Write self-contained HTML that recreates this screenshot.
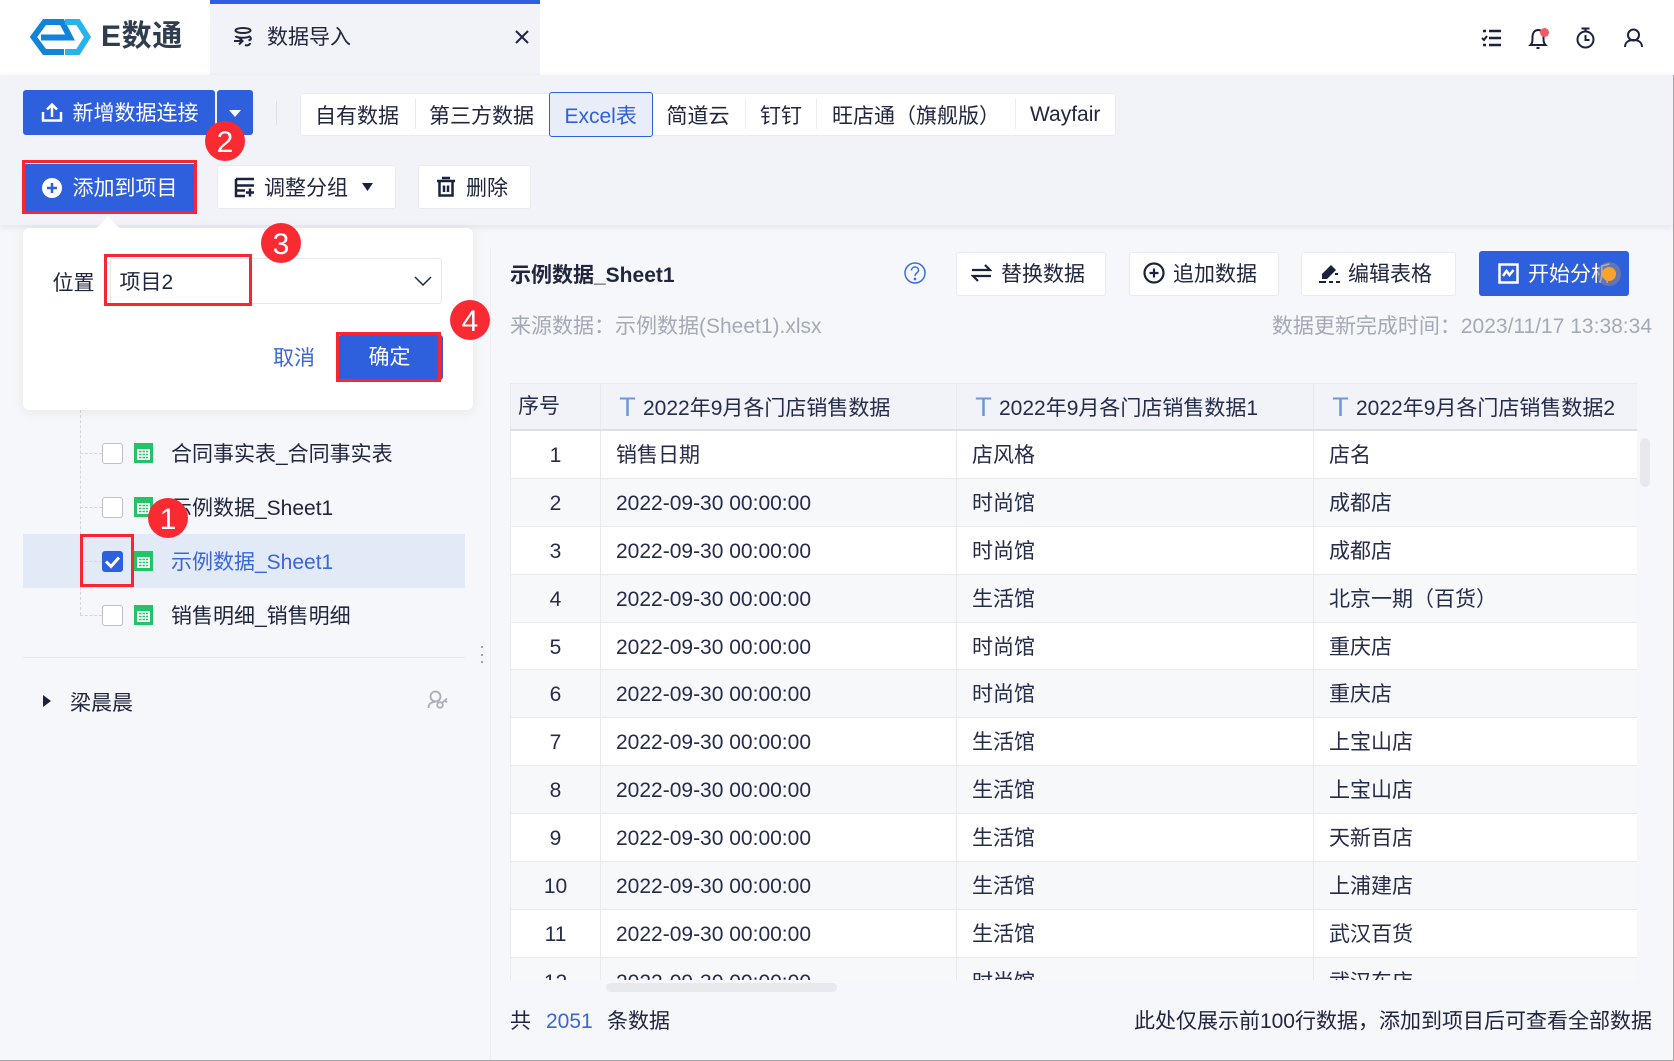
<!DOCTYPE html>
<html lang="zh"><head><meta charset="utf-8"><title>数据导入</title>
<style>
html,body{margin:0;padding:0;width:1674px;height:1061px;overflow:hidden;background:#f6f7fa}
body{position:relative;font-family:"Liberation Sans","Noto Sans CJK SC",sans-serif;font-size:21px;color:#20263f}
.a,.t,svg.i{position:absolute}
.t{white-space:nowrap;line-height:30px;height:30px;margin-top:2px}
.w{color:#fff}
.btn{position:absolute;background:#fff;border:1px solid #e9ebf0;border-radius:3px;box-sizing:border-box}
.blue{position:absolute;background:#2e5fdc;border-radius:3px}
.badge{position:absolute;width:40px;height:40px;border-radius:50%;background:#fa2a33;color:#fff;text-align:center;line-height:43px;font-size:30px}
.red{position:absolute;border:3px solid #f7262f;box-sizing:border-box}
.cb{position:absolute;left:102px;width:21px;height:21px;box-sizing:border-box;border:1.5px solid #bcc0c9;border-radius:3px;background:#fff}
.v{position:absolute;left:80px;width:22px;border-top:1px dashed #d3d5db}
.r{display:flex;height:47.9px;box-sizing:border-box;border-bottom:1px solid #e8eaef;background:#fff;line-height:49px;font-size:21px;color:#252b4a}
.r:nth-child(odd){background:#f7f8fa}
.r span{display:block;box-sizing:border-box;border-right:1px solid #e8eaef;white-space:nowrap}
.c0{width:91px;text-align:center;border-left:1px solid #e8eaef}
.c1{width:356px;padding-left:15px}
.c2{width:357px;padding-left:15px}
.c3{width:323px;padding-left:15px;border-right:0!important}
.h{background:#f1f3f8!important;height:48px;border-top:1px solid #e8eaef;border-bottom:2px solid #dcdfe7;line-height:46px}
.h .c0{text-align:left;padding-left:7px}
.h b{font-weight:400;color:#6f95dc;font-size:27px;margin:0 7px 0 3px;vertical-align:-1px;display:inline-block;width:17px;text-align:center}
.h .c1,.h .c2,.h .c3{padding-left:15px}
</style></head><body>

<!-- header -->
<div class="a" style="left:0;top:0;width:1674px;height:75px;background:#fff"></div>
<div class="a" style="left:210px;top:0;width:330px;height:75px;background:#f1f3f8"></div>
<div class="a" style="left:210px;top:0;width:330px;height:4px;background:#2e5fdc"></div>
<svg class="i" style="left:0;top:0" width="100" height="75" fill="none">
<path d="M64 52H44.500L33.500 37L44.500 22H62L70 37.500H41" stroke="#0f84d8" stroke-width="6"/>
<path d="M65 22H78L87.500 37L78 52H65" stroke="#25b5ec" stroke-width="6"/>
</svg>
<div class="t" style="left:101px;top:21px;margin-top:0;font-size:30px;font-weight:700;color:#2f3d4e;line-height:32px;height:32px;letter-spacing:.6px">E数通</div>
<svg class="i" style="left:232px;top:26px" width="22" height="22" fill="none" stroke="#20263f" stroke-width="2">
<ellipse cx="11" cy="4.500" rx="7.500" ry="2.500"/><path d="M3.500 10c1 2 10 2.500 14 .5 2 2 2 3-1 4M2 15H10M7 11.500L10.500 15L7 18.500M13 19c3 1 5-.5 5-2"/></svg>
<div class="t" style="left:267px;top:21px">数据导入</div>
<svg class="i" style="left:514px;top:29px" width="16" height="16" stroke="#20263f" stroke-width="2"><path d="M2 2L14 14M14 2L2 14"/></svg>

<svg class="i" style="left:1480px;top:26px" width="180" height="26" fill="none" stroke="#1a2240" stroke-width="2">
<path d="M9 5H21M9 12H21M9 19H21" stroke-width="2.500"/><path d="M3 5H6M3 19H6" stroke-width="2.500"/><path d="M2 12L4 14L7 10"/>
<path d="M50.500 19C52.500 17 52.500 15 52.500 11C52.500 6 55.500 4 58 4C61.500 4 63.500 6 63.500 11C63.500 15 63.500 17 65.500 19ZM56.500 22H59.500"/>
<circle cx="105.500" cy="13.500" r="8"/><path d="M105.500 9V14H109.500M101.500 2.500H109.500M105.500 2.500V5"/>
<circle cx="153.500" cy="9" r="5.500"/><path d="M145 21C145 16 149 14 153.500 14C158 14 162 16 162 21"/>
</svg>
<div class="a" style="left:1540px;top:27.500px;width:9px;height:9px;border-radius:50%;background:#f05a60"></div>

<!-- toolbar band -->
<div class="a" style="left:0;top:75px;width:1674px;height:150px;background:#f1f3f8;box-shadow:0 2px 6px rgba(120,125,145,.16)"></div>
<div class="blue" style="left:23px;top:90px;width:192px;height:45px"></div>
<div class="blue" style="left:217px;top:90px;width:36px;height:45px"></div>
<svg class="i" style="left:41px;top:101px" width="22" height="22" fill="none" stroke="#fff" stroke-width="2.500"><path d="M2 11V19.500H20V11M11 16V3.500M6 8.500L11 3.500L16 8.500"/></svg>
<div class="t w" style="left:72.500px;top:97px">新增数据连接</div>
<svg class="i" style="left:228px;top:109px" width="14" height="9"><path d="M1 1H13L7 8Z" fill="#fff"/></svg>
<div class="a" style="left:276px;top:101px;width:1px;height:24px;background:#dfe1e8"></div>

<div class="a" style="left:300px;top:93px;width:816px;height:43px;background:#fff;border:1px solid #e9ebf0;border-radius:3px;box-sizing:border-box"></div>
<div class="a" style="left:415px;top:99px;width:1px;height:30px;background:#e6e8ee"></div>
<div class="a" style="left:549px;top:92px;width:104px;height:45px;background:#e8edf9;border:1px solid #2e5fdc;border-radius:3px;box-sizing:border-box"></div>
<div class="a" style="left:816px;top:99px;width:1px;height:30px;background:#eceef2"></div>
<div class="a" style="left:1015px;top:99px;width:1px;height:30px;background:#eceef2"></div>
<div class="a" style="left:745px;top:99px;width:1px;height:30px;background:#eceef2"></div>
<div class="t" style="left:315px;top:100px">自有数据</div>
<div class="t" style="left:429px;top:100px">第三方数据</div>
<div class="t" style="left:564.500px;top:100px;color:#2e5fdc">Excel表</div>
<div class="t" style="left:666.500px;top:100px">简道云</div>
<div class="t" style="left:760px;top:100px">钉钉</div>
<div class="t" style="left:832px;top:100px">旺店通（旗舰版）</div>
<div class="t" style="left:1030px;top:98px">Wayfair</div>

<!-- action row -->
<div class="blue" style="left:24px;top:164px;width:170px;height:47px;border-radius:0"></div>
<div class="red" style="left:22px;top:160px;width:175px;height:54px"></div>
<svg class="i" style="left:41px;top:177px" width="22" height="22"><circle cx="11" cy="11" r="10" fill="#fff"/><path d="M11 6V16M6 11H16" stroke="#2e5fdc" stroke-width="2.500"/></svg>
<div class="t w" style="left:72.500px;top:172px">添加到项目</div>

<div class="btn" style="left:217px;top:165px;width:179px;height:44px"></div>
<svg class="i" style="left:234px;top:176px" width="22" height="22" fill="none" stroke="#1a2240" stroke-width="2.500"><path d="M2 3H20M2 3V20H11M2 9.500H20M2 14.500H11M16 12.500V20.500M12 16.500H20"/></svg>
<div class="t" style="left:264px;top:172px">调整分组</div>
<svg class="i" style="left:362px;top:183px" width="11" height="8"><path d="M0 0H11L5.500 8Z" fill="#1a2240"/></svg>
<div class="btn" style="left:418px;top:165px;width:113px;height:44px"></div>
<svg class="i" style="left:436px;top:176px" width="20" height="22" fill="none" stroke="#1a2240" stroke-width="2.500"><path d="M1 5H19M6 2H14M3.500 5.500V19.500H16.500V5.500M8 9.500V16M12 9.500V16"/></svg>
<div class="t" style="left:466px;top:172px">删除</div>

<!-- left panel line -->
<div class="a" style="left:490px;top:248px;width:1px;height:812px;background:#eceef2"></div>

<!-- tree -->
<div class="a" style="left:23px;top:534px;width:442px;height:54px;background:#e2e9f7"></div>
<div class="a" style="left:80px;top:405px;width:0;height:210px;border-left:1px dashed #d3d5db"></div>
<div class="v" style="top:453px"></div><div class="v" style="top:507px"></div><div class="v" style="top:561px"></div><div class="v" style="top:615px"></div>
<div class="cb" style="top:443px"></div><div class="cb" style="top:497px"></div><div class="cb" style="top:605px"></div>
<div class="cb" style="top:551px;background:#2e5fdc;border-color:#2e5fdc"></div>
<svg class="i" style="left:102px;top:551px" width="21" height="21" fill="none" stroke="#fff" stroke-width="3"><path d="M4 10.500L9 15.500L17 6.500"/></svg>

<svg class="i" style="left:134px;top:443px" width="19" height="20"><rect width="19" height="20" fill="#22c566"/><rect x="3" y="6" width="13" height="11" fill="#fff"/><path d="M5 8.500H14M5 11.500H14M5 14.500H14" stroke="#22c566" stroke-width="1.500" stroke-dasharray="2.500 1"/></svg>
<svg class="i" style="left:134px;top:497px" width="19" height="20"><rect width="19" height="20" fill="#22c566"/><rect x="3" y="6" width="13" height="11" fill="#fff"/><path d="M5 8.500H14M5 11.500H14M5 14.500H14" stroke="#22c566" stroke-width="1.500" stroke-dasharray="2.500 1"/></svg>
<svg class="i" style="left:134px;top:551px" width="19" height="20"><rect width="19" height="20" fill="#22c566"/><rect x="3" y="6" width="13" height="11" fill="#fff"/><path d="M5 8.500H14M5 11.500H14M5 14.500H14" stroke="#22c566" stroke-width="1.500" stroke-dasharray="2.500 1"/></svg>
<svg class="i" style="left:134px;top:605px" width="19" height="20"><rect width="19" height="20" fill="#22c566"/><rect x="3" y="6" width="13" height="11" fill="#fff"/><path d="M5 8.500H14M5 11.500H14M5 14.500H14" stroke="#22c566" stroke-width="1.500" stroke-dasharray="2.500 1"/></svg>
<div class="t" style="left:171px;top:438px">合同事实表_合同事实表</div>
<div class="t" style="left:171px;top:492px">示例数据_Sheet1</div>
<div class="t" style="left:171px;top:546px;color:#3a66da">示例数据_Sheet1</div>
<div class="t" style="left:171px;top:600px">销售明细_销售明细</div>
<div class="red" style="left:80px;top:534px;width:54px;height:53px"></div>
<div class="badge" style="left:148px;top:498px">1</div>

<div class="a" style="left:23px;top:657px;width:442px;height:1px;background:#e6e8ed"></div>
<div class="a" style="left:481px;top:646px;width:2px;height:2px;background:#9a9eaa"></div>
<div class="a" style="left:481px;top:654px;width:2px;height:2px;background:#9a9eaa"></div>
<div class="a" style="left:481px;top:661px;width:2px;height:2px;background:#9a9eaa"></div>
<svg class="i" style="left:43px;top:695px" width="8" height="12"><path d="M0 0L8 6L0 12Z" fill="#1a2240"/></svg>
<div class="t" style="left:70px;top:687px">梁晨晨</div>
<svg class="i" style="left:427px;top:690px" width="22" height="20" fill="none" stroke="#a9adb8" stroke-width="1.800"><circle cx="8.500" cy="6.500" r="5"/><path d="M1.500 18C1.500 14 4 12 8 12"/><circle cx="13" cy="15" r="2.800"/><path d="M15 13L20 8.500M18 10.500L20 12.500"/></svg>

<!-- popover -->
<div class="a" style="left:23px;top:228px;width:450px;height:182px;background:#fff;border-radius:6px;box-shadow:0 2px 10px rgba(120,125,145,.12)"></div>
<svg class="i" style="left:96px;top:216px" width="24" height="13"><path d="M0 13L12 0L24 13Z" fill="#fff"/></svg>
<div class="t" style="left:52.500px;top:267px">位置</div>
<div class="a" style="left:110px;top:258px;width:332px;height:46px;border:1px solid #e6e8ee;border-radius:3px;box-sizing:border-box"></div>
<div class="t" style="left:119.500px;top:266px">项目2</div>
<svg class="i" style="left:414px;top:276px" width="18" height="10" fill="none" stroke="#20263f" stroke-width="1.500"><path d="M1 1L9 9L17 1"/></svg>
<div class="red" style="left:104px;top:254px;width:148px;height:52px"></div>
<div class="t" style="left:273px;top:342px;color:#3a66da">取消</div>
<div class="blue" style="left:338px;top:335px;width:105px;height:45px"></div>
<div class="t w" style="left:368.500px;top:341px">确定</div>
<div class="red" style="left:336px;top:332px;width:105px;height:50px"></div>
<div class="badge" style="left:205px;top:121px">2</div>
<div class="badge" style="left:261px;top:223px">3</div>
<div class="badge" style="left:450px;top:300px">4</div>

<!-- right top -->
<div class="t" style="left:510px;top:259px;font-weight:700;font-size:21px">示例数据_Sheet1</div>
<svg class="i" style="left:904px;top:262px" width="22" height="22" fill="none" stroke="#3d6ddf" stroke-width="1.500"><circle cx="11" cy="11" r="10"/><path d="M7.500 8.500C7.500 3.800 14.500 4 14.500 8.300C14.500 11 11 10.800 11 14"/><circle cx="11" cy="17" r=".6"/></svg>

<div class="btn" style="left:956px;top:252px;width:150px;height:44px"></div>
<svg class="i" style="left:971px;top:263px" width="21" height="20" fill="none" stroke="#1a2240" stroke-width="2.200"><path d="M1 7H19L14 2M20 13H2L7 18"/></svg>
<div class="t" style="left:1001px;top:258px">替换数据</div>
<div class="btn" style="left:1129px;top:252px;width:150px;height:44px"></div>
<svg class="i" style="left:1143px;top:262px" width="22" height="22" fill="none" stroke="#1a2240" stroke-width="2.200"><circle cx="11" cy="11" r="9.500"/><path d="M11 6.500V15.500M6.500 11H15.500"/></svg>
<div class="t" style="left:1173px;top:258px">追加数据</div>
<div class="btn" style="left:1301px;top:252px;width:155px;height:44px"></div>
<svg class="i" style="left:1319px;top:262px" width="21" height="22"><path d="M3 12L12 3L17 8L8 17H3Z" fill="#1a2240"/><path d="M0 20H7M10 20H14M17 20H21M16 12H19" stroke="#1a2240" stroke-width="2"/></svg>
<div class="t" style="left:1348px;top:258px">编辑表格</div>
<div class="blue" style="left:1479px;top:251px;width:150px;height:45px"></div>
<svg class="i" style="left:1498px;top:263px" width="21" height="21" fill="none" stroke="#fff" stroke-width="2.500"><rect x="1.500" y="1.500" width="18" height="18"/><path d="M5 13L8.500 8L11.500 12L15.500 7"/></svg>
<div class="t w" style="left:1528px;top:258px">开始分析</div>
<div class="a" style="left:1597px;top:262px;width:24px;height:24px;border-radius:50%;background:rgba(130,130,150,.65)"></div>
<div class="a" style="left:1602px;top:267px;width:14px;height:14px;border-radius:50%;background:#f9a32b"></div>

<div class="t" style="left:510px;top:310px;color:#a4a9b6">来源数据：示例数据(Sheet1).xlsx</div>
<div class="t" style="right:22px;top:310px;color:#a4a9b6">数据更新完成时间：2023/11/17 13:38:34</div>

<!-- table -->
<div class="a" style="left:510px;top:383px;width:1127px;height:597px;overflow:hidden">
<div class="r h" style="height:48px"><span class="c0">序号</span><span class="c1"><b>T</b>2022年9月各门店销售数据</span><span class="c2"><b>T</b>2022年9月各门店销售数据1</span><span class="c3"><b>T</b>2022年9月各门店销售数据2</span></div>
<div class="r"><span class="c0">1</span><span class="c1">销售日期</span><span class="c2">店风格</span><span class="c3">店名</span></div>
<div class="r"><span class="c0">2</span><span class="c1">2022-09-30 00:00:00</span><span class="c2">时尚馆</span><span class="c3">成都店</span></div>
<div class="r"><span class="c0">3</span><span class="c1">2022-09-30 00:00:00</span><span class="c2">时尚馆</span><span class="c3">成都店</span></div>
<div class="r"><span class="c0">4</span><span class="c1">2022-09-30 00:00:00</span><span class="c2">生活馆</span><span class="c3">北京一期（百货）</span></div>
<div class="r"><span class="c0">5</span><span class="c1">2022-09-30 00:00:00</span><span class="c2">时尚馆</span><span class="c3">重庆店</span></div>
<div class="r"><span class="c0">6</span><span class="c1">2022-09-30 00:00:00</span><span class="c2">时尚馆</span><span class="c3">重庆店</span></div>
<div class="r"><span class="c0">7</span><span class="c1">2022-09-30 00:00:00</span><span class="c2">生活馆</span><span class="c3">上宝山店</span></div>
<div class="r"><span class="c0">8</span><span class="c1">2022-09-30 00:00:00</span><span class="c2">生活馆</span><span class="c3">上宝山店</span></div>
<div class="r"><span class="c0">9</span><span class="c1">2022-09-30 00:00:00</span><span class="c2">生活馆</span><span class="c3">天新百店</span></div>
<div class="r"><span class="c0">10</span><span class="c1">2022-09-30 00:00:00</span><span class="c2">生活馆</span><span class="c3">上浦建店</span></div>
<div class="r"><span class="c0">11</span><span class="c1">2022-09-30 00:00:00</span><span class="c2">生活馆</span><span class="c3">武汉百货</span></div>
<div class="r"><span class="c0">12</span><span class="c1">2022-09-30 00:00:00</span><span class="c2">时尚馆</span><span class="c3">武汉东店</span></div>
</div>
<div class="a" style="left:1640px;top:438px;width:10px;height:49px;border-radius:5px;background:#e8e9ed"></div>
<div class="a" style="left:606px;top:983px;width:231px;height:9px;border-radius:5px;background:#e8e9ec"></div>

<!-- footer -->
<div class="t" style="left:510px;top:1005px">共</div>
<div class="t" style="left:546px;top:1005px;color:#3a66da">2051</div>
<div class="t" style="left:607px;top:1005px">条数据</div>
<div class="t" style="right:22px;top:1005px">此处仅展示前100行数据，添加到项目后可查看全部数据</div>

<!-- window edge -->
<div class="a" style="left:0;top:1060px;width:1674px;height:1px;background:#a8a8a8"></div>
<div class="a" style="left:1673px;top:75px;width:1px;height:986px;background:#a8a8a8"></div>
</body></html>
